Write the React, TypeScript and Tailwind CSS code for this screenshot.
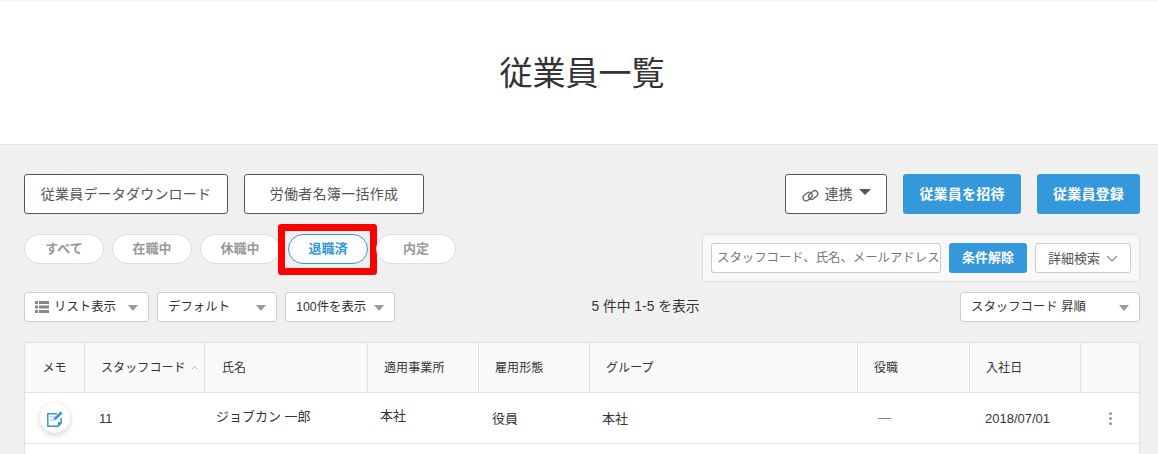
import type { ReactNode } from "react";

function Caret() {
  return <span className="h-0 w-0 border-x-[5px] border-t-[6px] border-x-transparent border-t-[#999]" />;
}

function Tab({ label, active }: { label: string; active?: boolean }) {
  return (
    <div className={"relative flex h-[30px] w-[80px] items-center justify-center rounded-[15px] border bg-white text-[13px] font-bold " + (active ? "border-[#3498db] text-[#3498db]" : "border-[#ddd] text-[#999]")}>
      {label}
      {active && <span className="absolute -left-[11px] -top-[11px] h-[51px] w-[99px] rounded-[3px] border-[7px] border-[#ff0000]" />}
    </div>
  );
}

function Sel({ w, children }: { w: string; children: ReactNode }) {
  return (
    <div className={"flex h-[30px] items-center justify-between rounded-[3px] border border-[#ccc] bg-white pl-[10px] pr-[10px] text-[12.4px] text-[#333] " + w}>
      {children}
    </div>
  );
}

function Th({ w, children, cls = "" }: { w: string; children?: ReactNode; cls?: string }) {
  return (
    <div className={"flex h-full shrink-0 items-center border-r border-[#e0e0e0] text-[12px] tracking-[0.1px] text-[#333] " + w + " " + cls}>
      {children}
    </div>
  );
}

function Td({ w, children, cls = "" }: { w: string; children?: ReactNode; cls?: string }) {
  return <div className={"flex h-full shrink-0 items-center text-[13px] text-[#333] " + w + " " + cls}>{children}</div>;
}

export default function App() {
  return (
    <div className="flex h-[454px] w-[1158px] flex-col overflow-hidden bg-[#f0f0f0] font-['Liberation_Sans','Noto_Sans_CJK_JP',sans-serif]">
      <header className="flex h-[145px] shrink-0 items-center justify-center border-b border-t border-b-[#e0e0e0] border-t-[#f5f5f5] bg-white pl-[6px] pt-[2px] text-[33px] text-[#333]">
        従業員一覧
      </header>
      <main className="flex flex-col px-[24px] pr-[18px] pt-[29px]">
        <div className="flex h-[40px] items-center">
          <div className="flex h-[40px] w-[204px] items-center justify-center rounded-[3px] border border-[#555] bg-white pt-[1px] text-[14px] tracking-[0.2px] text-[#555]">従業員データダウンロード</div>
          <div className="ml-[16px] flex h-[40px] w-[180px] items-center justify-center rounded-[3px] border border-[#555] bg-white pt-[1px] text-[14px] tracking-[0.3px] text-[#555]">労働者名簿一括作成</div>
          <div className="ml-auto flex h-[40px] w-[102px] items-center justify-center gap-[6px] rounded-[3px] border border-[#555] bg-white pt-[1px] text-[14px] text-[#555]">
            <svg width="17" height="14" viewBox="0 0 17 14" fill="none" stroke="#666" strokeWidth="1.3" className="mt-[2px]">
              <rect x="0.6" y="4.6" width="10" height="6" rx="3" transform="rotate(-40 5.6 7.6)" />
              <rect x="6.2" y="3" width="10" height="6" rx="3" transform="rotate(-40 11.2 6)" />
            </svg>
            <span>連携</span>
            <span className="mb-[6px] h-0 w-0 border-x-[6px] border-t-[6px] border-x-transparent border-t-[#555]" />
          </div>
          <div className="ml-[16px] flex h-[40px] w-[118px] items-center justify-center rounded-[3px] bg-[#3498db] pt-[1px] text-[14px] font-bold tracking-[0.2px] text-white">従業員を招待</div>
          <div className="ml-[16px] flex h-[40px] w-[103px] items-center justify-center rounded-[3px] bg-[#3498db] pt-[1px] text-[14px] font-bold tracking-[0.2px] text-white">従業員登録</div>
        </div>
        <div className="mt-[20px] flex h-[48px] items-start">
          <div className="flex gap-[8px]">
            <Tab label="すべて" />
            <Tab label="在職中" />
            <Tab label="休職中" />
            <Tab label="退職済" active />
            <Tab label="内定" />
          </div>
          <div className="ml-auto flex h-[48px] w-[438px] items-center gap-[8px] rounded-[3px] border border-[#e0e0e0] bg-[#f8f8f8] px-[8px]">
            <div className="flex h-[30px] w-[230px] shrink-0 items-center overflow-hidden whitespace-nowrap rounded-[3px] border border-[#ccc] bg-white pl-[5px] text-[12.4px] text-[#777]">スタッフコード、氏名、メールアドレス</div>
            <div className="flex h-[30px] w-[78px] items-center justify-center rounded-[3px] bg-[#3498db] text-[13px] font-bold text-white">条件解除</div>
            <div className="flex h-[30px] w-[96px] items-center justify-center gap-[6px] rounded-[3px] border border-[#ccc] bg-white pt-[1px] text-[13px] text-[#555]">
              詳細検索
              <svg width="12" height="7" viewBox="0 0 12 7" fill="none" stroke="#888" strokeWidth="1.2"><path d="M1 1l5 5 5-5" /></svg>
            </div>
          </div>
        </div>
        <div className="mt-[10px] flex h-[30px] items-center">
          <Sel w="w-[125px] pt-[1px]">
            <span className="flex items-center gap-[5px]">
              <svg width="14" height="12" viewBox="0 0 14 12" fill="#888"><rect width="3" height="3" /><rect x="4" width="10" height="3" /><rect y="4.5" width="3" height="3" /><rect x="4" y="4.5" width="10" height="3" /><rect y="9" width="3" height="3" /><rect x="4" y="9" width="10" height="3" /></svg>
              リスト表示
            </span>
            <Caret />
          </Sel>
          <Sel w="ml-[8px] w-[120px] pt-[1px]">デフォルト<Caret /></Sel>
          <Sel w="ml-[8px] w-[110px] pt-[1px]">100件を表示<Caret /></Sel>
          <div className="flex-1 pr-[64px] text-center text-[13.8px] text-[#333]">5 件中 1-5 を表示</div>
          <Sel w="w-[180px] pt-[1px]">スタッフコード 昇順<Caret /></Sel>
        </div>
        <div className="mt-[20px] w-[1116px] border border-b-0 border-[#e0e0e0] bg-white">
          <div className="flex h-[50px] items-center border-b border-[#e0e0e0] bg-[#f9f9f9]">
            <Th w="w-[60px]" cls="justify-center">メモ</Th>
            <Th w="w-[120px]" cls="pl-[16px]">
              スタッフコード
              <svg width="7" height="4" viewBox="0 0 7 4" fill="none" stroke="#aaa" strokeWidth="0.9" className="ml-[5px]"><path d="M0.5 3.5l3-3 3 3" /></svg>
            </Th>
            <Th w="w-[163px]" cls="pl-[17px]">氏名</Th>
            <Th w="w-[111px]" cls="pl-[16px]">適用事業所</Th>
            <Th w="w-[111px]" cls="pl-[16px]">雇用形態</Th>
            <Th w="w-[268px]" cls="pl-[16px]">グループ</Th>
            <Th w="w-[112px]" cls="pl-[16px]">役職</Th>
            <Th w="w-[111px]" cls="pl-[16px]">入社日</Th>
            <div className="flex-1" />
          </div>
          <div className="flex h-[51px] items-center border-b border-[#e0e0e0]">
            <Td w="w-[60px]" cls="justify-center">
              <span className="flex h-[30px] w-[30px] items-center justify-center rounded-full bg-white shadow-[0_2px_6px_rgba(0,0,0,0.18)]">
                <svg width="17" height="17" viewBox="0 0 17 17" fill="none">
                  <path d="M10 3.7H0.8v12.5H11l3.2-3.2V8" stroke="#3498db" strokeWidth="1.5" />
                  <path d="M11 16v-4h3.6z" fill="#3498db" />
                  <path d="M3 7h5M3 10h3" stroke="#8cc4ea" strokeWidth="1.2" />
                  <path d="M5.8 10.8l1-3L13.5 1l2.4 2.4-6.8 6.6z" fill="#3498db" stroke="#fff" strokeWidth="0.7" />
                </svg>
              </span>
            </Td>
            <Td w="w-[131px]" cls="pl-[14px] pt-[2px]">11</Td>
            <Td w="w-[164px]" cls="pb-[3px]">ジョブカン 一郎</Td>
            <Td w="w-[112px]" cls="pb-[5px]">本社</Td>
            <Td w="w-[110px]" cls="pt-[1px]">役員</Td>
            <Td w="w-[272px]" cls="pt-[1px]">本社</Td>
            <Td w="w-[111px]" cls="pl-[4px] text-[#888]">—</Td>
            <Td w="w-[96px]" cls="pt-[2px]">2018/07/01</Td>
            <div className="ml-[28px] flex flex-col gap-[2px]">
              <span className="h-[3px] w-[3px] rounded-full bg-[#999]" />
              <span className="h-[3px] w-[3px] rounded-full bg-[#999]" />
              <span className="h-[3px] w-[3px] rounded-full bg-[#999]" />
            </div>
          </div>
          <div className="h-[20px]" />
        </div>
      </main>
    </div>
  );
}
